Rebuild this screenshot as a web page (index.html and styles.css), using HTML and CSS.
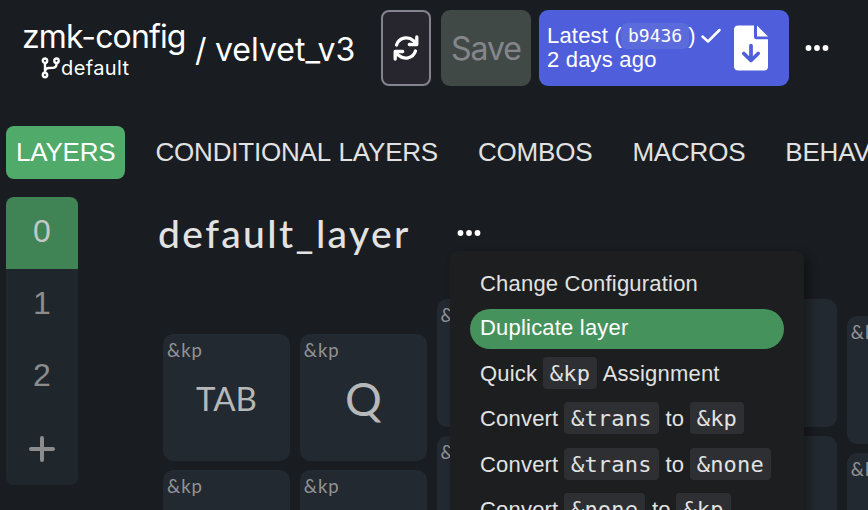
FILE: index.html
```
<!DOCTYPE html>
<html lang="en">
<head>
<meta charset="utf-8">
<title>zmk-config / velvet_v3</title>
<link rel="stylesheet" href="styles.css">
</head>
<body>
<header class="topbar">
  <div class="repo">
    <div class="repo-name">zmk-config</div>
    <div class="branch">
      <svg class="branch-icon" width="20" height="22" viewBox="0 0 20 22" fill="none" stroke="currentColor" stroke-width="2.400"><circle cx="4" cy="3.700" r="2.200"/><circle cx="4" cy="18" r="2.200"/><circle cx="15.500" cy="3.700" r="2.200"/><path d="M4 6v9.800M15.500 6v1.200q0 3.500-4 3.700L7.500 11Q4 11.300 4 14.500"/></svg>
      <span class="branch-name">default</span>
    </div>
  </div>
  <span class="slash">/</span>
  <span class="keyboard-name">velvet_v3</span>
  <button class="sync" aria-label="Sync"><svg width="28" height="28" viewBox="0 0 28 28" fill="none" stroke="currentColor" stroke-width="3.300" stroke-linecap="round" stroke-linejoin="round"><path d="M4.500 11C7 3.500 16 1.800 21.500 6.700l3 3M24.800 3v7.500h-7.500M23.500 17C21 24.500 12 26.200 6.500 21.300l-3-3M3.200 25v-7.500h7.500"/></svg></button>
  <button class="save">Save</button>
  <button class="build">
    <span class="build-text">
      <span class="build-line">Latest (<code>b9436</code>)<svg class="check" width="22" height="18" viewBox="0 0 22 18" fill="none" stroke="currentColor" stroke-width="2.500" stroke-linecap="round" stroke-linejoin="round"><path d="M2.500 9.500l5.500 5L19.500 3"/></svg></span>
      <span class="build-line">2 days ago</span>
    </span>
    <svg class="file" width="34" height="46" viewBox="0 0 34 46"><path fill="#fff" d="M4.500.500H20V12q0 2.300 2.300 2.300H34V41.500q0 4-4 4H4.500q-4.500 0-4.500-4V4.500q0-4 4.500-4zM23 .500 34 11.500H23z"/><path d="M17 20.500V35M9.800 28.500 17 35.500l7.200-7" fill="none" stroke="#4f5edb" stroke-width="3.700" stroke-linecap="round" stroke-linejoin="round"/></svg>
  </button>
  <svg class="dots" width="24" height="8" viewBox="0 0 24 8" fill="currentColor"><circle cx="3.500" cy="4" r="2.900"/><circle cx="12" cy="4" r="2.900"/><circle cx="20.500" cy="4" r="2.900"/></svg>
</header>
<nav class="tabs">
  <a class="tab active">LAYERS</a>
  <a class="tab">CONDITIONAL LAYERS</a>
  <a class="tab">COMBOS</a>
  <a class="tab">MACROS</a>
  <a class="tab">BEHAVIORS</a>
</nav>
<main class="workspace">
  <div class="layers">
    <div class="layer current">0</div>
    <div class="layer">1</div>
    <div class="layer">2</div>
    <div class="layer"><svg width="26" height="26" viewBox="0 0 26 26" stroke="currentColor" stroke-width="4" stroke-linecap="round"><path d="M13 2v22M2 13h22"/></svg></div>
  </div>
  <section class="editor">
    <div class="title-row">
      <h1>default_layer</h1>
      <div class="more">
        <svg class="dots" width="24" height="8" viewBox="0 0 24 8" fill="currentColor"><circle cx="3.500" cy="4" r="2.900"/><circle cx="12" cy="4" r="2.900"/><circle cx="20.500" cy="4" r="2.900"/></svg>
        <div class="menu">
          <div class="item">Change Configuration</div>
          <div class="item hover">Duplicate layer</div>
          <div class="item">Quick <code>&amp;kp</code> Assignment</div>
          <div class="item">Convert <code>&amp;trans</code> to <code>&amp;kp</code></div>
          <div class="item">Convert <code>&amp;trans</code> to <code>&amp;none</code></div>
          <div class="item">Convert <code>&amp;none</code> to <code>&amp;kp</code></div>
        </div>
      </div>
    </div>
    <div class="keys">
      <div class="col outer"><div class="key"><span class="bind">&amp;kp</span><span class="legend word">TAB</span></div><div class="key"><span class="bind">&amp;kp</span></div></div>
      <div class="col outer"><div class="key"><span class="bind">&amp;kp</span><span class="legend">Q</span></div><div class="key"><span class="bind">&amp;kp</span></div></div>
      <div class="col ring"><div class="key"><span class="bind">&amp;kp</span></div><div class="key"><span class="bind">&amp;kp</span></div></div>
      <div class="col ring"><div class="key"></div><div class="key"></div></div>
      <div class="col ring"><div class="key"></div><div class="key"></div></div>
      <div class="col inner"><div class="key"><span class="bind">&amp;kp</span></div><div class="key"><span class="bind">&amp;kp</span></div></div>
    </div>
  </section>
</main>
</body>
</html>
```
FILE: styles.css
```
* { box-sizing: border-box; }
html { height: 510px; overflow: hidden; }
body {
  margin: 0;
  width: 868px;
  height: 510px;
  overflow: hidden;
  background: #191c20;
  color: #e2e2e2;
  font-family: "Liberation Sans", sans-serif;
}
button { border: 0; margin: 0; padding: 0; font: inherit; color: #fff; flex: none; }
svg { display: block; flex: none; }
.topbar {
  display: flex;
  align-items: center;
  height: 96px;
  color: #fff;
  font-family: Inter, sans-serif;
  font-size: 32px;
  white-space: nowrap;
}
.repo { flex: none; width: 195px; padding-left: 22px; }
.repo-name { line-height: 38px; letter-spacing: -.85px; margin-top: 2px; }
.branch { display: flex; align-items: center; padding-left: 19px; height: 25px; }
.branch-name { font-size: 20px; letter-spacing: .4px; }
.slash { flex: none; width: 20px; }
.keyboard-name { flex: none; width: 166px; }
.slash, .keyboard-name { line-height: 38px; padding-top: 3px; }
.sync {
  display: flex;
  align-items: center;
  justify-content: center;
  width: 50px;
  height: 76px;
  border: 2px solid #85838f;
  border-radius: 8px;
  background: #27252e;
}
.save {
  width: 90px;
  height: 76px;
  margin-left: 10px;
  border-radius: 9px;
  background: #414947;
  color: #85868b;
  letter-spacing: -1px;
}
.build {
  display: flex;
  align-items: center;
  width: 250px;
  height: 76px;
  margin-left: 8px;
  padding-left: 8px;
  border-radius: 9px;
  background: #4f5edb;
  font-family: "Liberation Sans", sans-serif;
  font-size: 22px;
  letter-spacing: .2px;
  text-align: left;
}
.build-text { width: 187px; }
.build-line { display: flex; align-items: center; height: 24px; }
.build code {
  height: 26px;
  padding: 0 7px;
  margin: 0 -1px;
  border-radius: 6px;
  background: #5c6bdc;
  font: 18px/26px "DejaVu Sans Mono", monospace;
  letter-spacing: 0;
}
.check { margin-left: 4px; }
.topbar > .dots { margin-left: 16px; }
.tabs {
  display: flex;
  gap: 20px;
  margin-top: 30px;
  padding-left: 6px;
  white-space: nowrap;
}
.tab {
  height: 53px;
  padding: 0 10px;
  border-radius: 8px;
  font-size: 26px;
  line-height: 53px;
  letter-spacing: -.2px;
  word-spacing: 1.500px;
}
.tab.active { background: #50aa69; color: #fff; }
.workspace { display: flex; height: 331px; overflow: hidden; padding: 18px 0 0 6px; }
.layers {
  width: 72px;
  height: 288px;
  border-radius: 8px;
  overflow: hidden;
  background: #20272c;
  flex: none;
}
.layer {
  display: flex;
  align-items: center;
  justify-content: center;
  height: 72px;
  padding-bottom: 4px;
  color: #8c8c8c;
  font-size: 32px;
}
.layer svg { position: relative; top: 2px; }
.layer.current { background: #408355; color: #c3c8c5; }
.editor { margin-left: 80px; flex: none; }
.title-row { display: flex; height: 72px; align-items: center; }
h1 {
  width: 299px;
  margin: 0;
  font: 500 39px/50px Lato, sans-serif;
  letter-spacing: 2.400px;
}
.more { position: relative; color: #fff; }
.menu {
  position: absolute;
  z-index: 2;
  top: 22px;
  left: -7px;
  width: 354px;
  height: 400px;
  padding: 13px 20px;
  border-radius: 8px;
  background: #1d1e1f;
  color: #e2e2e2;
  box-shadow: 5px 5px 10px rgba(0, 0, 0, .35);
  font-size: 22px;
  letter-spacing: .2px;
  white-space: nowrap;
}
.item { height: 40px; margin-bottom: 5.500px; padding-left: 10px; line-height: 38px; }
.item:first-child { line-height: 40px; margin-bottom: 5px; }
.item.hover { border-radius: 20px; background: #46925d; color: #fff; line-height: 37px; }
.item code {
  display: inline-block;
  height: 32px;
  padding: 0 7px;
  margin-left: -.8px;
  margin-right: .5px;
  border-radius: 4px;
  background: #2e2f33;
  font: 22px/33px "DejaVu Sans Mono", monospace;
}
.keys { display: flex; gap: 9.800px; padding: 30px 0 0 5px; }
.col { display: flex; flex-direction: column; gap: 9px; flex: none; }
.outer { padding-top: 35px; }
.ring .key, .inner .key { height: 128px; }
.ring { margin-left: -.1px; }
.inner { padding-top: 16.500px; }
.key {
  display: grid;
  grid-template-rows: 32px 66px;
  width: 127px;
  height: 127px;
  border-radius: 10px;
  background: #232930;
}
.bind {
  padding-left: 4px;
  color: #919395;
  font: 18.500px/32px Lato, sans-serif;
  letter-spacing: 1px;
}
.legend {
  color: #b7b8b9;
  font: 46px/66px Lato, sans-serif;
  text-align: center;
}
.legend.word { font-size: 33px; line-height: 65px; }
```
